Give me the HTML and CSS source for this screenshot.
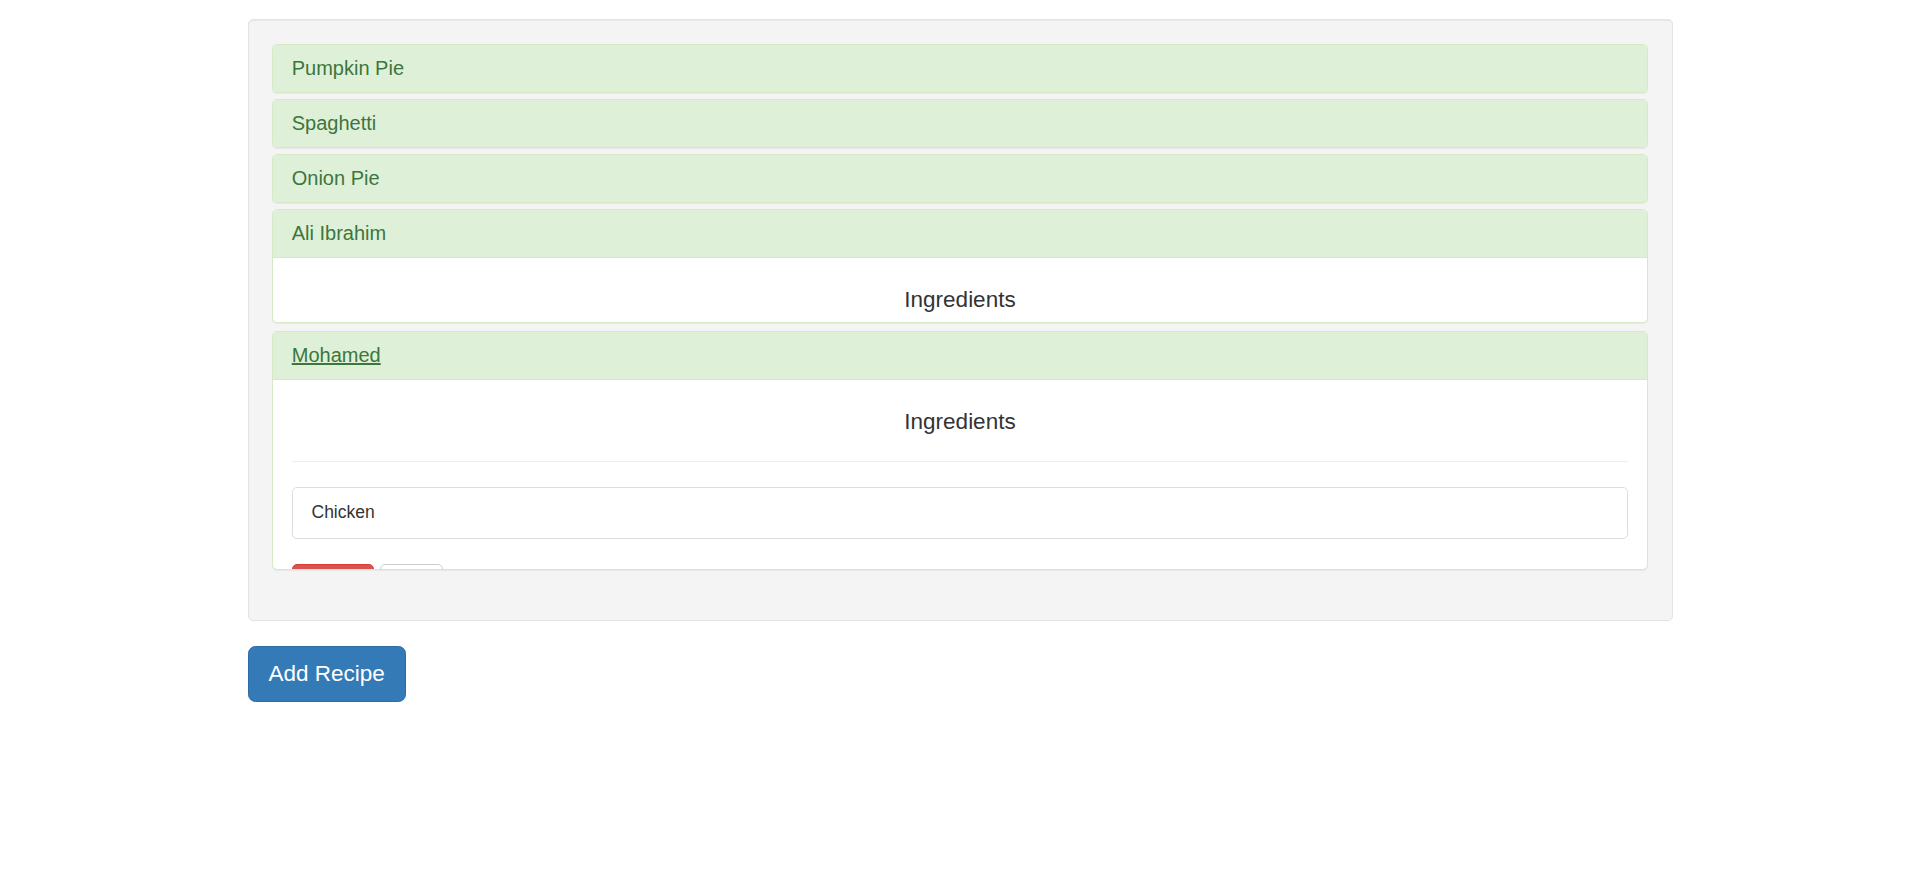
FILE: index.html
```html
<!DOCTYPE html>
<html lang="en">
<head>
<meta charset="utf-8">
<title>Recipe Box</title>
<link rel="stylesheet" href="styles.css">
</head>
<body>
<div class="container">
  <div class="well">
    <div class="panel-group">
      <div class="panel">
        <div class="panel-heading"><h4 class="panel-title"><a class="panel-link">Pumpkin Pie</a></h4></div>
      </div>
      <div class="panel">
        <div class="panel-heading"><h4 class="panel-title"><a class="panel-link">Spaghetti</a></h4></div>
      </div>
      <div class="panel">
        <div class="panel-heading"><h4 class="panel-title"><a class="panel-link">Onion Pie</a></h4></div>
      </div>
      <div class="panel">
        <div class="panel-heading"><h4 class="panel-title"><a class="panel-link">Ali Ibrahim</a></h4></div>
        <div class="panel-collapse collapsing-short">
          <div class="panel-body">
            <h4 class="ingredients-title">Ingredients</h4>
            <hr class="divider">
          </div>
        </div>
      </div>
      <div class="panel panel-late">
        <div class="panel-heading"><h4 class="panel-title"><a class="panel-link is-hover">Mohamed</a></h4></div>
        <div class="panel-collapse collapsing-tall">
          <div class="panel-body">
            <h4 class="ingredients-title">Ingredients</h4>
            <hr class="divider">
            <ul class="list-group">
              <li class="list-group-item">Chicken</li>
            </ul>
            <div class="btn-row">
              <button class="btn btn-danger">Delete</button>
              <button class="btn btn-default">Edit</button>
            </div>
          </div>
        </div>
      </div>
    </div>
  </div>
  <button class="btn btn-primary btn-lg">Add Recipe</button>
</div>
</body>
</html>
```
FILE: styles.css
```css
* {
  box-sizing: border-box;
}

html, body {
  margin: 0;
  padding: 0;
  background: #fff;
}

body {
  font-family: "Liberation Sans", Arial, Helvetica, sans-serif;
  font-size: 17.5px;
  line-height: 25px;
  color: #333;
}

.container {
  width: 1425px;
  margin: 0 auto;
  padding-top: 19px;
}

.well {
  background: #f4f4f4;
  border: 1px solid #e3e3e3;
  border-radius: 5px;
  padding: 23.5px;
  margin-bottom: 25px;
  box-shadow: inset 0 1px 1px rgba(0, 0, 0, 0.05);
}

.panel-group {
  margin-bottom: 27px;
}

.panel {
  background: #fff;
  border: 1px solid #d6e9c6;
  border-radius: 5px;
  box-shadow: 0 1px 1px rgba(0, 0, 0, 0.05);
  overflow: hidden;
}

.panel + .panel {
  margin-top: 6px;
}

.panel + .panel-late {
  margin-top: 8px;
}

.panel-heading {
  background: #dff0d8;
  color: #3c763d;
  padding: 12.5px 18.75px;
}

.panel-title {
  margin: 0;
  font-size: 20px;
  font-weight: 400;
  line-height: 22px;
  color: inherit;
}

.panel-link {
  color: inherit;
  text-decoration: none;
}

.panel-link.is-hover {
  text-decoration: underline;
}

.panel-collapse {
  overflow: hidden;
}

.collapsing-short {
  height: 65px;
}

.collapsing-tall {
  height: 190px;
}

.panel-body {
  border-top: 1px solid #d6e9c6;
  padding: 18.75px;
}

.ingredients-title {
  margin: 12px 0 0;
  font-size: 22.5px;
  font-weight: 400;
  line-height: 24.75px;
  text-align: center;
  color: #333;
}

.divider {
  margin: 25.5px 0 25px;
  border: 0;
  border-top: 1px solid #eee;
  height: 0;
}

.list-group {
  margin: 0 0 25px;
  padding: 0;
  list-style: none;
}

.list-group-item {
  display: block;
  padding: 12.5px 18.75px;
  border: 1px solid #ddd;
  border-radius: 5px;
  background: #fff;
  color: #333;
}

.btn-row {
  display: flex;
  gap: 6px;
}

.btn {
  display: inline-block;
  font-family: inherit;
  font-size: 17.5px;
  line-height: 25px;
  padding: 7.5px 15px;
  border: 1px solid transparent;
  border-radius: 5px;
  cursor: pointer;
  white-space: nowrap;
}

.btn-danger {
  background: #d9534f;
  border-color: #d43f3a;
  color: #fff;
}

.btn-default {
  background: #fff;
  border-color: #ccc;
  color: #333;
}

.btn-primary {
  background: #337ab7;
  border-color: #2e6da4;
  color: #fff;
}

.btn-lg {
  font-size: 22.5px;
  line-height: 30px;
  padding: 12px 20px;
  border-radius: 7.5px;
}
```
